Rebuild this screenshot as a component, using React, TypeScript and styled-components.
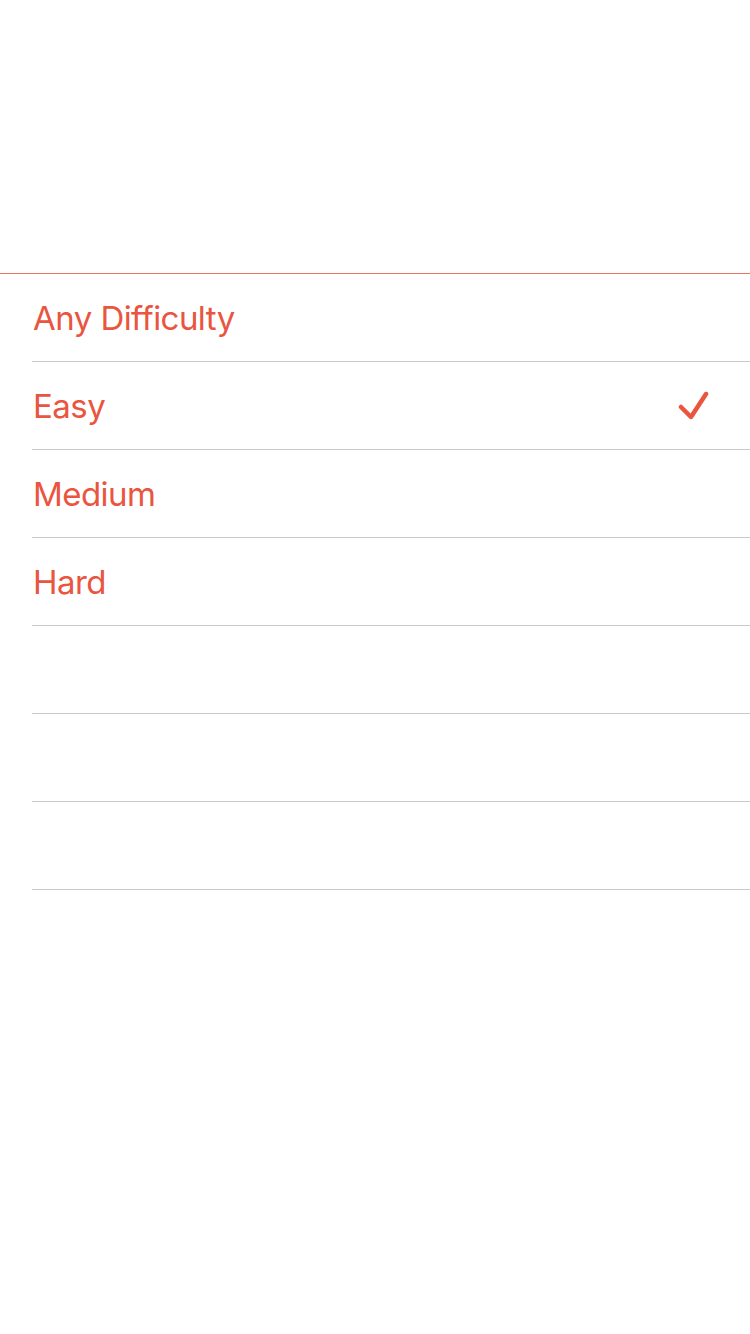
import React from "react";
import styled, { createGlobalStyle } from "styled-components";

const Global = createGlobalStyle`
  html, body { margin: 0; padding: 0; background: #fff; }
  body { font-family: Inter, "Liberation Sans", sans-serif; }
`;

const Page = styled.div`
  width: 750px;
  height: 1334px;
  background: #fff;
  display: flex;
  flex-direction: column;
`;

const Header = styled.div`
  height: 273px;
  flex: none;
`;

const List = styled.ul`
  list-style: none;
  margin: 0;
  padding: 0;
  border-top: 1px solid #ec7560;
`;

const Row = styled.li`
  height: 88px;
  margin-left: 32px;
  padding-right: 38px;
  border-bottom: 1px solid #c8c7cc;
  display: flex;
  align-items: center;
  justify-content: space-between;
  box-sizing: border-box;
`;

const Label = styled.span`
  font-size: 33px;
  color: #e9553f;
  margin-left: 1px;
  margin-top: 1px;
  letter-spacing: -0.55px;
`;

const CheckIcon = styled.svg`
  margin-top: 2px;
`;

const Check = () => (
  <CheckIcon width="34" height="34" viewBox="0 0 34 34" aria-hidden>
    <path
      d="M3 17 L13 27 L28 4"
      fill="none"
      stroke="#e9553f"
      strokeWidth="4.5"
      strokeLinecap="round"
      strokeLinejoin="round"
    />
  </CheckIcon>
);

const items = ["Any Difficulty", "Easy", "Medium", "Hard", "", "", ""];

export default function App() {
  return (
    <>
      <Global />
      <Page>
        <Header />
        <List>
          {items.map((t, i) => (
            <Row key={i}>
              <Label>{t}</Label>
              {i === 1 && <Check />}
            </Row>
          ))}
        </List>
      </Page>
    </>
  );
}
